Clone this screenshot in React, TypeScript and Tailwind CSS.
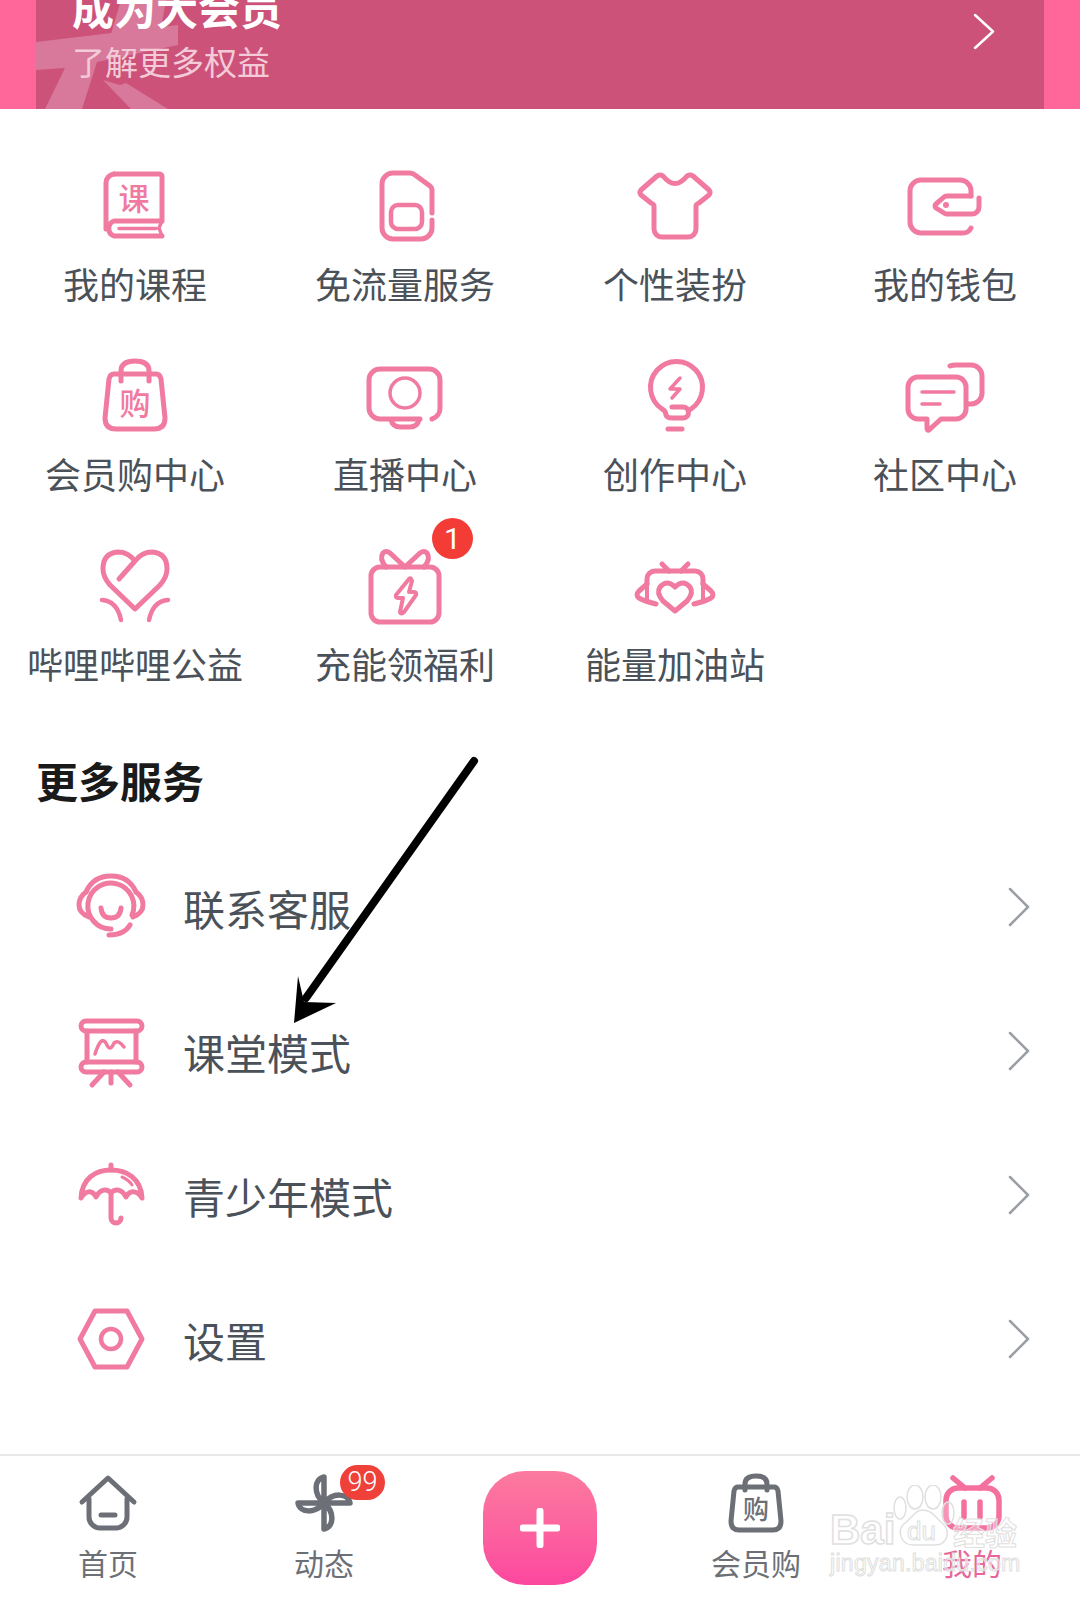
import React from "react";

const Ico = ({ children, size = 90, sw = 5 }: { children: React.ReactNode; size?: number; sw?: number }) => (
  <svg width={size} height={size} viewBox={`0 0 ${size} ${size}`} fill="none" stroke="currentColor" strokeWidth={sw} strokeLinecap="round" strokeLinejoin="round">
    {children}
  </svg>
);

const Chevron = ({ w = 22, h = 40, sw = 2.5 }: { w?: number; h?: number; sw?: number }) => (
  <svg width={w} height={h} viewBox={`0 0 ${w} ${h}`} fill="none" stroke="currentColor" strokeWidth={sw} strokeLinecap="round" strokeLinejoin="round">
    <path d={`M2 2 L${w - 2} ${h / 2} L2 ${h - 2}`} />
  </svg>
);

const BookIcon = () => (
  <Ico>
    <path d="M24 13h46a3 3 0 0 1 2 3v44H24a8 8 0 0 0 0 15h48" />
    <path d="M16 68V22a9 9 0 0 1 8-9" />
    <path d="M72 60l-3 7 3 8M29 67.5h37" strokeWidth="3.5" />
    <text x="44" y="49" textAnchor="middle" fontSize="31" fontWeight="500" fill="currentColor" stroke="none">课</text>
  </Ico>
);
const SimIcon = () => (
  <Ico>
    <path d="M72 52V30a6 6 0 0 0-2-5L55 14a8 8 0 0 0-5-2H33a11 11 0 0 0-11 11v44a11 11 0 0 0 11 11h28a11 11 0 0 0 11-11v-8" />
    <rect x="31" y="44" width="31" height="24" rx="7" strokeWidth="4.5" />
  </Ico>
);
const ShirtIcon = () => (
  <Ico>
    <path d="M33 15Q45 30 57 15Q60 13 63 15L79 29Q81 32 79 34L69 42Q66 43 66 45V68a8 8 0 0 1-8 8H32a8 8 0 0 1-8-8V45Q24 43 21 42L11 34Q9 32 11 29L27 15Q30 13 33 15Z" />
  </Ico>
);
const WalletIcon = () => (
  <Ico>
    <path d="M71 35v-5a11 11 0 0 0-11-11H21a11 11 0 0 0-11 11v31a11 11 0 0 0 11 11h42a9 9 0 0 0 8-5" />
    <path d="M71 35H47a4 4 0 0 0-3 1l-8 7a3 3 0 0 0 0 4l8 5a4 4 0 0 0 3 1h25a7 7 0 0 0 7-7v-9" />
    <circle cx="46" cy="44" r="3" fill="currentColor" stroke="none" />
  </Ico>
);
const BagIcon = () => (
  <Ico>
    <path d="M24 23H66Q70 23 71 28L75 67Q75 78 64 78H26Q15 78 15 67L19 28Q20 23 24 23Z" />
    <path d="M31 30V20Q31 10 45 10Q59 10 59 20V30" />
    <text x="45" y="64" textAnchor="middle" fontSize="31" fontWeight="500" fill="currentColor" stroke="none">购</text>
  </Ico>
);
const MonitorIcon = () => (
  <Ico>
    <path d="M60 68H20a11 11 0 0 1-11-11V29a11 11 0 0 1 11-11h49a11 11 0 0 1 11 11v28a11 11 0 0 1-8 11" />
    <circle cx="45" cy="42" r="15" strokeWidth="3.5" />
    <path d="M31 69Q33 76 40 76H50Q57 76 59 69" />
  </Ico>
);
const BulbIcon = () => (
  <Ico>
    <path d="M61 58A26 26 0 1 0 32 58Q36 60 36 64Q37 67 42 67H53a5 5 0 0 0 0-11H42" />
    <path d="M38 78H52" />
    <path d="M50 27L40 38H50L42 47" strokeWidth="3.5" />
  </Ico>
);
const ChatIcon = () => (
  <Ico>
    <path d="M50 15Q52 14 56 14H71a11 11 0 0 1 11 11V42a11 11 0 0 1-11 11H68" />
    <path d="M18 26H56a10 10 0 0 1 10 10V58a10 10 0 0 1-10 10H41L29 79Q27 80 27 77V68H18a10 10 0 0 1-10-10V36a10 10 0 0 1 10-10Z" />
    <path d="M22 41H54M22 53H40" strokeWidth="3.5" />
  </Ico>
);
const HeartIcon = () => (
  <Ico>
    <path d="M29 38L45 20Q52 11 62 11Q77 12 77 28Q77 36 70 44L45 68L20 44Q13 36 13 28Q13 12 28 11Q38 11 45 20" />
    <path d="M12 59Q27 60 31 79M78 59Q63 60 59 79" strokeWidth="4.5" />
  </Ico>
);
const GiftIcon = () => (
  <Ico>
    <rect x="11" y="26" width="68" height="55" rx="9" />
    <path d="M45 26L30 12Q26 9 23 12Q19 18 26 26M45 26L60 12Q64 9 67 12Q71 18 64 26" />
    <path d="M49 38L36 54Q35 57 38 57H43L40 71Q41 74 44 71L56 54Q57 51 54 51H49L52 40Q51 36 49 38Z" strokeWidth="4" />
  </Ico>
);
const RobotHeartIcon = () => (
  <Ico>
    <path d="M17 43V38a8 8 0 0 1 8-8H65a8 8 0 0 1 8 8V43" />
    <path d="M32 23L39 30M58 23L51 30" />
    <path d="M17 43V60M73 43V60" strokeWidth="4" />
    <path d="M17 43L9 50Q5 54 9 57Q14 60 26 63M73 43L81 50Q85 54 81 57Q76 60 64 63" />
    <path d="M45 70L33 60Q26 52 30 46Q37 38 45 46Q53 38 60 46Q64 52 57 60Z" />
  </Ico>
);
const HeadsetIcon = () => (
  <Ico>
    <path d="M20 27Q27 11 45 11Q63 11 70 27" />
    <path d="M20 27Q13 32 13 40Q13 48 23 52M70 27Q77 32 77 40Q77 48 67 52" />
    <path d="M45 64A23 23 0 1 1 66 50" />
    <path d="M43 70Q58 70 64 60" />
    <path d="M35 43Q36 53 45 53Q54 53 55 43" />
  </Ico>
);
const BoardIcon = () => (
  <Ico>
    <rect x="15" y="12" width="61" height="10" rx="5" />
    <rect x="15" y="53" width="61" height="10" rx="5" />
    <path d="M21 22V53M70 22V53M45 63V74M38 63L26 76M52 63L64 76" />
    <path d="M29 45Q35 26 40 34Q44 44 48 34Q52 30 58 38" strokeWidth="3.5" />
  </Ico>
);
const UmbrellaIcon = () => (
  <Ico>
    <path d="M15 45C16 25 30 17 45 17C60 17 75 25 76 45C72 38 64 36 60 44C56 36 49 35 45 40C41 35 34 36 30 44C26 36 19 38 15 45Z" />
    <path d="M45 12V17M45 40V65a5 5 0 0 0 10 0" />
    <path d="M56 24Q63 27 66 32" strokeWidth="3" />
  </Ico>
);
const HexIcon = () => (
  <Ico>
    <path d="M14 42L29 14H61L76 42L61 70H29Z" />
    <circle cx="45" cy="42" r="10" strokeWidth="4.5" />
  </Ico>
);

const HomeNav = () => (
  <Ico size={70}>
    <path d="M9 34L35 10L61 34" />
    <path d="M16 31V49a11 11 0 0 0 11 11H43a11 11 0 0 0 11-11V31" />
    <path d="M28 47H42" />
  </Ico>
);
const PinwheelNav = () => (
  <Ico size={70} sw={5.5}>
    {[0, 90, 180, 270].map((r) => (
      <path key={r} d="M35 35V9C25 11 24 26 35 35" transform={`rotate(${r} 35 35)`} />
    ))}
  </Ico>
);
const BagNav = () => (
  <Ico size={70}>
    <path d="M17 19H53Q56 19 57 23L60 53Q60 62 52 62H18Q10 62 10 53L13 23Q14 19 17 19Z" />
    <path d="M24 22V16Q24 8 35 8Q46 8 46 16V22" />
    <text x="35" y="51" textAnchor="middle" fontSize="26" fontWeight="500" fill="currentColor" stroke="none">购</text>
  </Ico>
);
const RobotNav = () => (
  <Ico size={70} sw={5.5}>
    <rect x="9" y="20" width="53" height="40" rx="12" />
    <path d="M28 20L16 10M43 20L55 10M27 34V49M43 34V49" />
  </Ico>
);

const services = [
  { label: "我的课程", icon: <BookIcon /> },
  { label: "免流量服务", icon: <SimIcon /> },
  { label: "个性装扮", icon: <ShirtIcon /> },
  { label: "我的钱包", icon: <WalletIcon /> },
  { label: "会员购中心", icon: <BagIcon /> },
  { label: "直播中心", icon: <MonitorIcon /> },
  { label: "创作中心", icon: <BulbIcon /> },
  { label: "社区中心", icon: <ChatIcon /> },
  { label: "哔哩哔哩公益", icon: <HeartIcon /> },
  { label: "充能领福利", icon: <GiftIcon />, badge: "1" },
  { label: "能量加油站", icon: <RobotHeartIcon /> },
];

const rows = [
  { label: "联系客服", icon: <HeadsetIcon /> },
  { label: "课堂模式", icon: <BoardIcon /> },
  { label: "青少年模式", icon: <UmbrellaIcon /> },
  { label: "设置", icon: <HexIcon /> },
];

export default function App() {
  return (
    <div className="relative flex h-[1600px] w-[1080px] flex-col overflow-hidden bg-white font-['Noto_Sans_CJK_SC',sans-serif]">
      {/* Banner */}
      <div className="h-[109px] shrink-0 bg-[#ff6699] px-[36px]">
        <div className="relative flex h-full items-start justify-between overflow-hidden bg-[#cc5279] pl-[36px] pr-[49px]">
          <svg className="absolute left-0 top-0" width="170" height="109" viewBox="0 0 170 109" fill="#d8789a">
            <path d="M0 42L142 25V45L61 62L46 109H9L29 68L0 70Z" />
            <path d="M75 34L85 0H130L125 28Z" />
            <path d="M67 80L84 85L90 83L132 109H95Z" />
          </svg>
          <div className="relative -mt-[17px]">
            <div className="text-[42px] font-bold leading-[48px] text-white">成为大会员</div>
            <div className="mt-[10px] text-[33px] leading-[40px] text-[#f3cbd8]">了解更多权益</div>
          </div>
          <div className="relative mt-[13px] text-white">
            <Chevron w={22} h={37} sw={2.5} />
          </div>
        </div>
      </div>

      {/* Service grid */}
      <div className="grid grid-cols-4 gap-y-[43px] pt-[52px]">
        {services.map((s) => (
          <div key={s.label} className="flex flex-col items-center">
            <div className="relative h-[90px] w-[90px] text-[#f17aa0]">
              {s.icon}
              {s.badge && (
                <span className="absolute left-[72px] top-[-23px] flex h-[41px] w-[41px] items-center justify-center rounded-full bg-[#f33c36] font-['Roboto',sans-serif] text-[30px] text-white">
                  {s.badge}
                </span>
              )}
            </div>
            <div className="mt-[7px] whitespace-nowrap text-[36px] leading-[50px] text-[#4b5159]">{s.label}</div>
          </div>
        ))}
      </div>

      {/* More services */}
      <h2 className="mt-[62px] pl-[36px] text-[42px] font-bold leading-[60px] text-[#1a1a1a]">更多服务</h2>
      <div className="mt-[28px]">
        {rows.map((r) => (
          <div key={r.label} className="flex h-[144px] items-center pl-[66px] pr-[50px]">
            <div className="h-[90px] w-[90px] text-[#f17aa0]">{r.icon}</div>
            <div className="ml-[27px] flex-1 pb-[4px] text-[42px] leading-[60px] text-[#4b5159]">{r.label}</div>
            <div className="pb-[6px] text-[#9b9fa4]">
              <Chevron w={22} h={40} sw={2.5} />
            </div>
          </div>
        ))}
      </div>

      {/* Bottom tabs */}
      <nav className="mt-auto grid h-[146px] grid-cols-5 border-t-2 border-[#e8e8e8] text-[30px] leading-[38px] text-[#6c7076]">
        <div className="flex flex-col items-center pt-[12px]">
          <HomeNav />
          <span className="mt-[5px]">首页</span>
        </div>
        <div className="flex flex-col items-center pt-[12px]">
          <div className="relative h-[70px] w-[70px]">
            <PinwheelNav />
            <span className="absolute left-[51px] top-[-3px] flex h-[35px] w-[45px] items-center justify-center rounded-full bg-[#f0403a] font-['Roboto',sans-serif] text-[27px] font-light leading-none text-white">
              99
            </span>
          </div>
          <span className="mt-[5px]">动态</span>
        </div>
        <div className="flex items-center justify-center">
          <div className="flex h-[114px] w-[114px] items-center justify-center rounded-[42px] bg-linear-to-b from-[#fb7a9e] to-[#fc479f] text-white">
            <svg width="40" height="40" viewBox="0 0 40 40" fill="none" stroke="currentColor" strokeWidth="7" strokeLinecap="round">
              <path d="M20 3V37M3 20H37" />
            </svg>
          </div>
        </div>
        <div className="flex flex-col items-center pt-[12px]">
          <BagNav />
          <span className="mt-[5px]">会员购</span>
        </div>
        <div className="flex flex-col items-center pt-[12px] text-[#f4709f]">
          <RobotNav />
          <span className="mt-[5px] text-[#e8679a]">我的</span>
        </div>
      </nav>

      {/* Annotation arrow */}
      <svg className="pointer-events-none absolute left-0 top-0" width="1080" height="1600" viewBox="0 0 1080 1600">
        <path d="M474 761L306 998" stroke="#000" strokeWidth="8" strokeLinecap="round" fill="none" />
        <path d="M294 1023L298 976L304 1002L336 1003Z" fill="#000" />
      </svg>

      {/* Baidu watermark */}
      <div className="pointer-events-none absolute left-[830px] top-[1484px] h-[100px] w-[200px]">
        <svg className="absolute left-[63px] top-[1px]" width="62" height="62" viewBox="0 0 62 62" fill="rgba(255,255,255,0.25)" stroke="#e0e0e0" strokeWidth="1.5">
          <ellipse cx="7" cy="23" rx="6" ry="11" />
          <ellipse cx="22" cy="12" rx="8" ry="12" />
          <ellipse cx="40" cy="12" rx="8" ry="12" />
          <ellipse cx="55" cy="28" rx="6" ry="11" />
          <path d="M30 25C22 25 19 33 12 38C3 45 8 60 20 60H42C54 60 58 47 50 39C43 33 39 25 30 25Z" />
        </svg>
        <span className="absolute left-0 top-[21px] font-['Liberation_Sans',sans-serif] text-[42px] font-bold leading-[50px] text-white/40 [-webkit-text-stroke:1.5px_#e0e0e0]">Bai</span>
        <span className="absolute left-[77px] top-[29px] font-['Liberation_Sans',sans-serif] text-[26px] leading-[36px] text-white/40 [-webkit-text-stroke:1px_#e0e0e0]">du</span>
        <span className="absolute left-[123px] top-[25px] whitespace-nowrap text-[32px] font-bold leading-[44px] text-white/40 [-webkit-text-stroke:1px_#e0e0e0]">经验</span>
        <span className="absolute left-0 top-[64px] whitespace-nowrap font-['Liberation_Sans',sans-serif] text-[23px] leading-[30px] tracking-[0.3px] text-white/40 [-webkit-text-stroke:1px_#e0e0e0]">jingyan.baidu.com</span>
      </div>
    </div>
  );
}
